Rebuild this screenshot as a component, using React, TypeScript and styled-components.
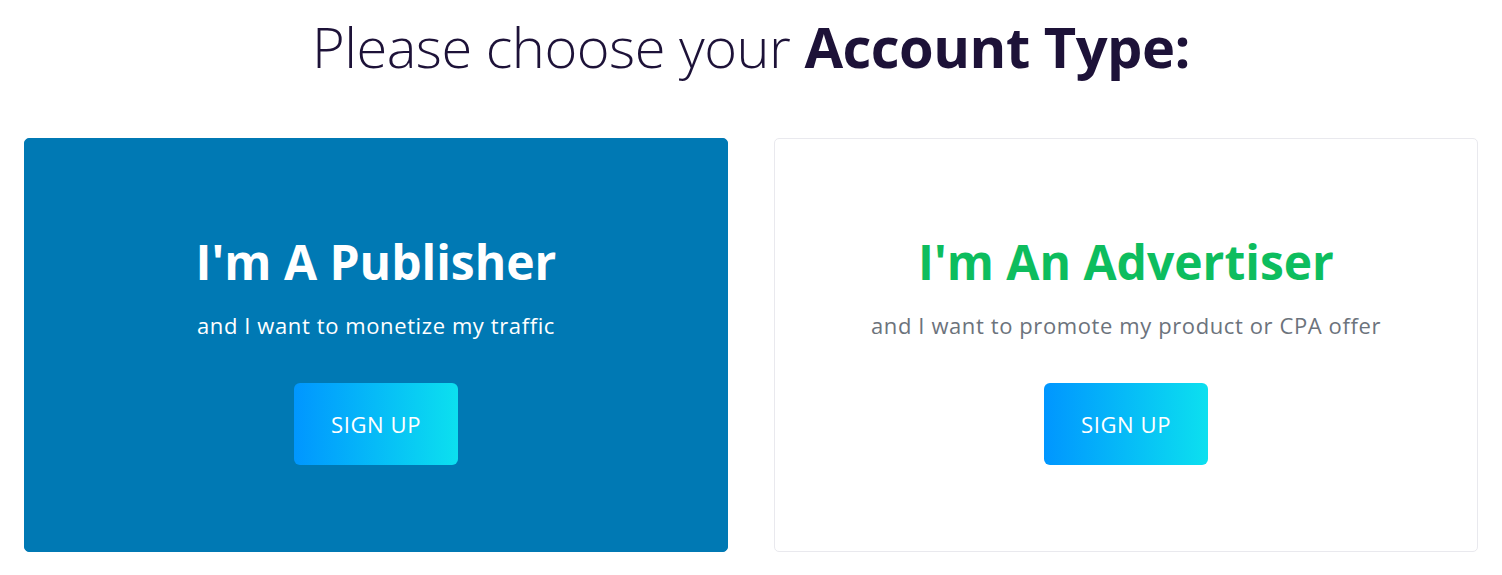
import styled, { createGlobalStyle } from "styled-components";

const GlobalStyle = createGlobalStyle`
  body {
    margin: 0;
    background: #ffffff;
    font-family: "Open Sans", "Noto Sans", sans-serif;
  }
`;

const Page = styled.div`
  padding: 8px 24px 22px;
  display: flex;
  flex-direction: column;
  align-items: center;
`;

const Heading = styled.h1`
  margin: 0 0 54px;
  font-size: 56px;
  line-height: 76px;
  font-weight: 300;
  color: #1d1238;
  letter-spacing: -0.5px;

  strong {
    font-weight: 700;
  }
`;

const Cards = styled.div`
  width: 100%;
  display: grid;
  grid-template-columns: 1fr 1fr;
  gap: 46px;
`;

const Card = styled.div<{ $active?: boolean }>`
  height: 414px;
  box-sizing: border-box;
  border-radius: 5px;
  background: ${({ $active }) => ($active ? "#0079b4" : "#ffffff")};
  border: 1px solid ${({ $active }) => ($active ? "#0079b4" : "#e9e9ee")};
  display: flex;
  flex-direction: column;
  align-items: center;
  padding-top: 93px;
`;

const Title = styled.h2<{ $active?: boolean }>`
  margin: 0;
  font-size: 48px;
  line-height: 60px;
  font-weight: 700;
  color: ${({ $active }) => ($active ? "#ffffff" : "#0dbd5e")};
`;

const Subtitle = styled.p<{ $active?: boolean }>`
  margin: 19px 0 44px;
  font-size: 22px;
  line-height: 28px;
  letter-spacing: 0.6px;
  color: ${({ $active }) => ($active ? "#ffffff" : "#6c737c")};
`;

const SignUp = styled.button`
  width: 164px;
  height: 82px;
  border: none;
  border-radius: 6px;
  background: linear-gradient(to right, #0096ff, #0ce0ef);
  color: #ffffff;
  font-family: inherit;
  font-size: 22px;
  letter-spacing: 0.6px;
  text-transform: uppercase;
  cursor: pointer;
`;

const App = () => {
  return (
    <>
      <GlobalStyle />
      <Page>
        <Heading>
          Please choose your <strong>Account Type:</strong>
        </Heading>
        <Cards>
          <Card $active>
            <Title $active>I'm A Publisher</Title>
            <Subtitle $active>and I want to monetize my traffic</Subtitle>
            <SignUp>Sign up</SignUp>
          </Card>
          <Card>
            <Title>I'm An Advertiser</Title>
            <Subtitle>and I want to promote my product or CPA offer</Subtitle>
            <SignUp>Sign up</SignUp>
          </Card>
        </Cards>
      </Page>
    </>
  );
};

export default App;
